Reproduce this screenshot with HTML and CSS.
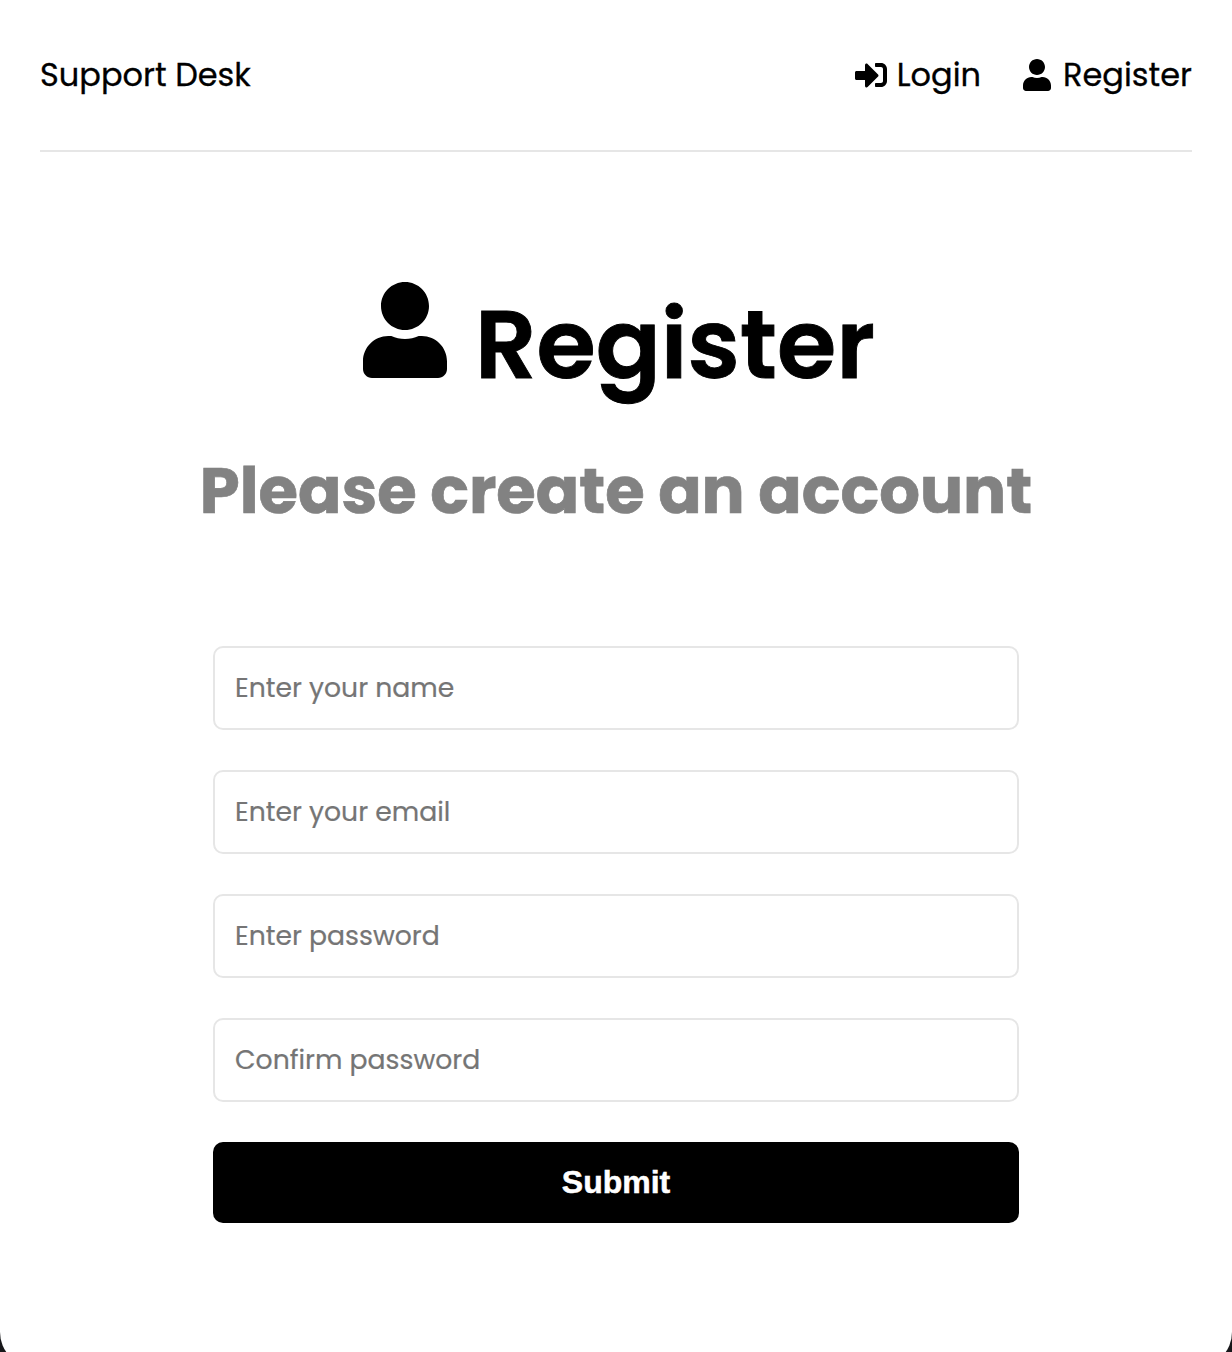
FILE: index.html
```html
<!DOCTYPE html>
<html lang="en">
<head>
<meta charset="utf-8">
<title>Support Desk</title>
<link rel="stylesheet" href="styles.css">
</head>
<body>
<div class="window">
  <header class="header">
    <a class="logo">Support Desk</a>
    <nav class="nav">
      <a class="nav-link login"><svg class="icon" viewBox="0 0 512 512" width="32" height="32"><path d="M416 448h-84c-6.6 0-12-5.4-12-12v-40c0-6.6 5.4-12 12-12h84c17.7 0 32-14.3 32-32V160c0-17.7-14.3-32-32-32h-84c-6.6 0-12-5.4-12-12V76c0-6.6 5.4-12 12-12h84c53 0 96 43 96 96v192c0 53-43 96-96 96zm-47-201L201 79c-15-15-41-4.5-41 17v96H24c-13.3 0-24 10.7-24 24v96c0 13.3 10.7 24 24 24h136v96c0 21.5 26 32 41 17l168-168c9.3-9.4 9.3-24.6 0-34z"/></svg><span>Login</span></a>
      <a class="nav-link register"><svg class="icon" viewBox="0 0 448 512" width="28" height="32"><path d="M224 256c70.7 0 128-57.3 128-128S294.7 0 224 0 96 57.3 96 128s57.3 128 128 128zm89.6 32h-16.7c-22.2 10.2-46.9 16-72.9 16s-50.6-5.8-72.9-16h-16.7C60.2 288 0 348.2 0 422.4V464c0 26.5 21.5 48 48 48h352c26.5 0 48-21.5 48-48v-41.6c0-74.2-60.2-134.4-134.4-134.4z"/></svg><span>Register</span></a>
    </nav>
  </header>
  <section class="heading">
    <h1 class="title"><svg class="icon" viewBox="0 0 448 512" width="84" height="96"><path d="M224 256c70.7 0 128-57.3 128-128S294.7 0 224 0 96 57.3 96 128s57.3 128 128 128zm89.6 32h-16.7c-22.2 10.2-46.9 16-72.9 16s-50.6-5.8-72.9-16h-16.7C60.2 288 0 348.2 0 422.4V464c0 26.5 21.5 48 48 48h352c26.5 0 48-21.5 48-48v-41.6c0-74.2-60.2-134.4-134.4-134.4z"/></svg><span class="title-text">Register</span></h1>
    <p class="subtitle">Please create an account</p>
  </section>
  <form class="form">
    <input class="field" type="text" placeholder="Enter your name">
    <input class="field" type="email" placeholder="Enter your email">
    <input class="field" type="password" placeholder="Enter password">
    <input class="field" type="password" placeholder="Confirm password">
    <button class="submit" type="button">Submit</button>
  </form>
</div>
</body>
</html>
```
FILE: styles.css
```css
* { box-sizing: border-box; margin: 0; padding: 0; }

html { background: #17171a; }

body {
  height: 100vh;
  overflow: hidden;
  font-family: Poppins, Inter, sans-serif;
  color: #000;
}

.window {
  height: 1367px;
  padding: 0 40px;
  background: #fff;
  border-radius: 0 0 35px 35px;
}

.header {
  display: flex;
  justify-content: space-between;
  align-items: center;
  height: 152px;
  border-bottom: 2px solid #e6e6e6;
  font-size: 32px;
  line-height: 48px;
  -webkit-text-stroke: 0.3px;
}

.logo, .nav-link span, .title-text, .subtitle { white-space: nowrap; }

.nav { display: flex; gap: 42px; }
.nav-link { display: flex; align-items: center; gap: 10px; }
.register { gap: 12px; }
.icon { display: block; flex: none; fill: currentColor; }

.heading {
  display: flex;
  flex-direction: column;
  align-items: center;
  padding-top: 130px;
}

.title {
  display: flex;
  gap: 28px;
  height: 144px;
  padding-left: 6px;
  font-size: 96px;
  font-weight: 600;
}

.title-text {
  line-height: 126px;
  -webkit-text-stroke: 0.9px;
}

.subtitle {
  margin-top: 17px;
  color: #828282;
  font-size: 64px;
  font-weight: 700;
  line-height: 96px;
  -webkit-text-stroke: 0.7px;
}

.form {
  display: flex;
  flex-direction: column;
  gap: 40px;
  width: 806px;
  margin: 107px auto 0;
}

.field {
  height: 84px;
  padding: 0 20px;
  border: 2px solid #e6e6e6;
  border-radius: 10px;
  background: #fff;
  font: 26.667px Poppins, Inter, sans-serif;
  -webkit-text-stroke: 0.2px;
}

.field::placeholder { color: #757575; }

.submit {
  height: 81px;
  border: 0;
  border-radius: 10px;
  background: #000;
  color: #fff;
  font: 700 32px "Liberation Sans", Arial, sans-serif;
  -webkit-text-stroke: 0.5px;
}
```
